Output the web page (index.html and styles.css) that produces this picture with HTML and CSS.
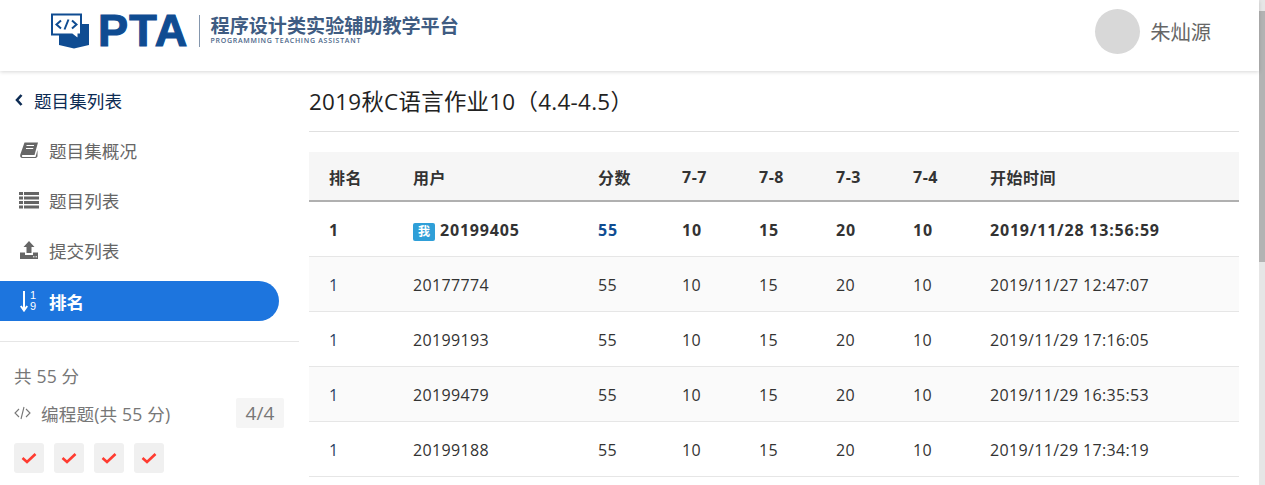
FILE: index.html
```html
<!DOCTYPE html>
<html lang="zh">
<head>
  <meta charset="UTF-8" />
  <meta name="viewport" content="width=device-width, initial-scale=1.0">
  <title>排名 - PTA</title>
  <link rel="stylesheet" href="styles.css">
</head>
<body>
  <div class="page">
    <header class="topbar">
      <div class="logo">
        <svg class="logo-icon" width="40" height="36" viewBox="0 0 40 36">
          <path d="M9 22V32L24 35.500L39 32V11H9Z" fill="#0f4c92"/>
          <path d="M2 1.500H31V21.500H28.500V26.500L22 21.500H2Z" fill="#fff" stroke="#0f4c92" stroke-width="2"/>
          <path d="M11 7.500L6.500 11.500L11 15.500M22 7.500L26.500 11.500L22 15.500M18.500 6.500L14.500 16.500" fill="none" stroke="#0f4c92" stroke-width="2"/>
        </svg>
        <span class="logo-pta">PTA</span>
        <span class="logo-line"></span>
        <div class="logo-text">
          <div class="logo-cn">程序设计类实验辅助教学平台</div>
          <div class="logo-en">PROGRAMMING TEACHING ASSISTANT</div>
        </div>
      </div>
      <div class="user">
        <span class="avatar"></span>
        <span class="user-name">朱灿源</span>
      </div>
    </header>

    <div class="layout">
      <aside class="sidebar">
        <a class="back">
          <svg width="8" height="12" viewBox="0 0 8 12"><path d="M6.500 1L2 6L6.500 11" fill="none" stroke="#0d2c54" stroke-width="2.600"/></svg>
          题目集列表
        </a>
        <a class="nav-item">
          <svg class="nav-icon" width="20" height="18" viewBox="0 0 20 18">
            <path d="M5.500 1.500H19L15.500 14H3.800C2.500 14 2.600 16 3.800 16H16.500L18.500 9V15.500L17 17H3.500C1.500 17 .8 15.500 1.300 13.500Z" fill="#666"/>
            <path d="M7.500 4.500H15M7 7.500H14.200" stroke="#fff" stroke-width="1.200"/>
          </svg>
          题目集概况
        </a>
        <a class="nav-item">
          <svg class="nav-icon" width="20" height="18" viewBox="0 0 20 18">
            <path d="M0 1h4v3H0zM5 1h15v3H5zM0 5.500h4v3H0zM5 5.500h15v3H5zM0 10h4v3H0zM5 10h15v3H5zM0 14.500h4v3H0zM5 14.500h15v3H5z" fill="#666"/>
          </svg>
          题目列表
        </a>
        <a class="nav-item">
          <svg class="nav-icon" width="20" height="18" viewBox="0 0 20 18">
            <path d="M10 0L15.500 6H12.500V12H7.500V6H4.500Z" fill="#666"/>
            <path d="M1 11.500H6V14H14V11.500H19V18H1Z" fill="#666"/>
            <path d="M14 15.800h1.500M16.500 15.800h1.500" stroke="#fff" stroke-width="1"/>
          </svg>
          提交列表
        </a>
        <a class="nav-item active">
          <span class="sort-icon">
            <svg width="8" height="21" viewBox="0 0 8 21"><path d="M4 0V19M.8 15L4 19.500L7.200 15" fill="none" stroke="#fff" stroke-width="2"/></svg>
            <span class="sort-digits"><span>1</span><span>9</span></span>
          </span>
          排名
        </a>
        <div class="summary">
          <div class="total">共 55 分</div>
          <div class="group">
            <svg width="17" height="14" viewBox="0 0 17 14"><path d="M5 3L1 7L5 11M12 3L16 7L12 11M10 1L7 13" fill="none" stroke="#777" stroke-width="1.100"/></svg>
            <span class="group-name">编程题(共 55 分)</span>
            <span class="group-count">4/4</span>
          </div>
          <div class="checks">
            <span class="check"><svg width="16" height="12" viewBox="0 0 16 12"><path d="M1.500 6L6 10L14.500 2" fill="none" stroke="#ff3b30" stroke-width="2.600"/></svg></span>
            <span class="check"><svg width="16" height="12" viewBox="0 0 16 12"><path d="M1.500 6L6 10L14.500 2" fill="none" stroke="#ff3b30" stroke-width="2.600"/></svg></span>
            <span class="check"><svg width="16" height="12" viewBox="0 0 16 12"><path d="M1.500 6L6 10L14.500 2" fill="none" stroke="#ff3b30" stroke-width="2.600"/></svg></span>
            <span class="check"><svg width="16" height="12" viewBox="0 0 16 12"><path d="M1.500 6L6 10L14.500 2" fill="none" stroke="#ff3b30" stroke-width="2.600"/></svg></span>
          </div>
        </div>
      </aside>

      <main class="content">
        <h1>2019秋C语言作业10（4.4-4.5）</h1>
        <table class="rank-table">
          <colgroup>
            <col class="col-rank"><col class="col-user"><col class="col-score">
            <col class="col-prob"><col class="col-prob"><col class="col-prob"><col class="col-prob">
            <col>
          </colgroup>
          <thead>
            <tr><th>排名</th><th>用户</th><th>分数</th><th>7-7</th><th>7-8</th><th>7-3</th><th>7-4</th><th>开始时间</th></tr>
          </thead>
          <tbody>
            <tr class="me">
              <td>1</td>
              <td><span class="me-tag">我</span>20199405</td>
              <td class="me-score">55</td><td>10</td><td>15</td><td>20</td><td>10</td><td>2019/11/28 13:56:59</td>
            </tr>
            <tr><td class="rank">1</td><td>20177774</td><td>55</td><td>10</td><td>15</td><td>20</td><td>10</td><td>2019/11/27 12:47:07</td></tr>
            <tr><td class="rank">1</td><td>20199193</td><td>55</td><td>10</td><td>15</td><td>20</td><td>10</td><td>2019/11/29 17:16:05</td></tr>
            <tr><td class="rank">1</td><td>20199479</td><td>55</td><td>10</td><td>15</td><td>20</td><td>10</td><td>2019/11/29 16:35:53</td></tr>
            <tr><td class="rank">1</td><td>20199188</td><td>55</td><td>10</td><td>15</td><td>20</td><td>10</td><td>2019/11/29 17:34:19</td></tr>
          </tbody>
        </table>
      </main>
    </div>
  </div>

  <div class="scrollbar">
    <div class="scroll-btn"></div>
    <div class="scroll-thumb"></div>
  </div>
</body>
</html>
```

FILE: styles.css
```css
html, body {
  height: 100%;
}

body {
  margin: 0;
  display: flex;
  overflow: hidden;
  font-family: "Open Sans", "Noto Sans CJK SC", sans-serif;
  font-size: 16px;
  color: #333;
  background: #fff;
}

.page {
  flex: 1;
  min-width: 0;
}

/* top bar */
.topbar {
  position: relative;
  z-index: 1;
  height: 71px;
  padding: 0 48px 0 50px;
  display: flex;
  align-items: center;
  justify-content: space-between;
  box-sizing: border-box;
  background: #fff;
  box-shadow: 0 1px 4px rgba(0, 0, 0, 0.16);
}

.logo {
  display: flex;
  align-items: center;
  height: 36px;
  margin-top: -10px;
}

.logo-pta {
  margin-left: 8px;
  font-family: "Liberation Sans", sans-serif;
  font-size: 45px;
  font-weight: bold;
  line-height: 36px;
  letter-spacing: 1.3px;
  color: #0f4c92;
  -webkit-text-stroke: 1.2px #0f4c92;
}

.logo-line {
  width: 1px;
  height: 32px;
  margin: 0 11px 0 10px;
  background: #8496ad;
}

.logo-cn {
  margin-top: -1px;
  font-size: 19.1px;
  font-weight: bold;
  line-height: 22px;
  color: #3f5c82;
}

.logo-en {
  font-size: 7px;
  font-weight: 600;
  line-height: 8px;
  letter-spacing: 0.72px;
  color: #4d678a;
}

.user {
  display: flex;
  align-items: center;
  gap: 10px;
  margin-top: -9px;
}

.avatar {
  width: 45px;
  height: 45px;
  border-radius: 50%;
  background: #d8d8d8;
}

.user-name {
  font-size: 20.3px;
  color: #666;
}

.layout {
  display: flex;
}

/* sidebar */
.sidebar {
  width: 299px;
  flex: none;
  padding-top: 4px;
  font-size: 17.6px;
}

.back, .nav-item {
  display: flex;
  align-items: center;
  height: 50px;
}

.back {
  gap: 11px;
  padding-left: 15px;
  color: #0d2c54;
}

.nav-item {
  gap: 10px;
  padding-left: 19px;
  color: #666;
}

.nav-item.active {
  width: 279px;
  height: 40px;
  margin-top: 6px;
  padding-left: 20px;
  gap: 12px;
  box-sizing: border-box;
  border-radius: 0 20px 20px 0;
  background: #1d75de;
  color: #fff;
  font-weight: bold;
}

.sort-icon {
  display: flex;
  flex: none;
  align-items: center;
  gap: 2px;
  width: 17px;
}

.sort-digits {
  display: flex;
  flex-direction: column;
  font-family: "Liberation Sans", sans-serif;
  font-size: 11px;
  line-height: 11px;
  font-weight: normal;
}

.summary {
  margin-top: 20px;
  padding: 21px 15px 0 14px;
  border-top: 1px solid #e6e6e6;
  font-size: 17.6px;
  letter-spacing: 0.15px;
  color: #777;
}

.total {
  line-height: 26px;
}

.group {
  display: flex;
  align-items: center;
  height: 30px;
  margin-top: 9px;
}

.group-name {
  flex: 1;
  margin-left: 10px;
}

.group-count {
  width: 48px;
  height: 30px;
  border-radius: 2px;
  background: #f5f5f5;
  font-size: 19px;
  line-height: 30px;
  text-align: center;
}

.checks {
  display: flex;
  gap: 10px;
  margin-top: 15px;
}

.check {
  width: 30px;
  height: 30px;
  display: flex;
  align-items: center;
  justify-content: center;
  border-radius: 3px;
  background: #f0f0f0;
}

/* main */
.content {
  flex: 1;
  padding: 0 20px 0 10px;
}

h1 {
  margin: 0 0 20px;
  height: 60px;
  border-bottom: 1px solid #e0e0e0;
  font-size: 22.4px;
  font-weight: normal;
  line-height: 62px;
  letter-spacing: 0.3px;
  color: #222;
}

.rank-table {
  width: 100%;
  table-layout: fixed;
  border-collapse: separate;
  border-spacing: 0;
}

.col-rank { width: 104px; }
.col-user { width: 185px; }
.col-score { width: 84px; }
.col-prob { width: 77px; }

.rank-table th, .rank-table td {
  padding: 2px 0 0 20px;
  text-align: left;
  white-space: nowrap;
}

.rank-table th:not(:first-child), .rank-table td:not(:first-child) {
  padding-left: 0;
}

.rank-table th {
  height: 46px;
  background: #f6f6f6;
  border-bottom: 2px solid #b0b0b0;
  font-weight: bold;
  letter-spacing: 0.5px;
}

.rank-table td {
  height: 52px;
  border-bottom: 1px solid #e6e6e6;
  letter-spacing: 0.35px;
}

.rank-table tbody tr:nth-child(even) td {
  background: #fafafa;
}

.rank-table .rank {
  color: #2c3f63;
}

.me td {
  font-weight: bold;
  letter-spacing: 0.8px;
}

.rank-table .me-score {
  color: #0f4c92;
}

.me-tag {
  display: inline-block;
  width: 22px;
  height: 18px;
  margin-right: 5px;
  border-radius: 2px;
  background: #2f9fd8;
  color: #fff;
  font-size: 12px;
  line-height: 18px;
  letter-spacing: 0;
  text-align: center;
}

/* scrollbar */
.scrollbar {
  width: 6px;
  flex: none;
  background: #e6e6e6;
}

.scroll-btn {
  height: 11px;
}

.scroll-thumb {
  height: 251px;
  background: #b3b3b3;
}
```
